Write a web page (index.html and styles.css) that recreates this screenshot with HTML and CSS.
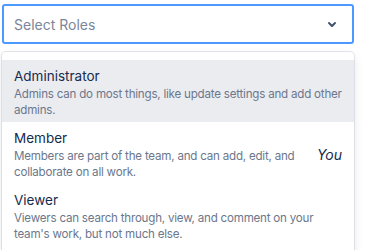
FILE: index.html
```html
<!DOCTYPE html>
<html lang="en">
  <head>
    <meta charset="UTF-8" />
    <title>Select Roles</title>
    <link rel="stylesheet" href="styles.css">
  </head>
  <body>
    <div class="wrapper">
      <div class="select">
        <span class="placeholder">Select Roles</span>
        <span class="indicator">
          <svg width="24" height="24" viewBox="0 0 24 24"><path fill="currentColor" d="M8.292 10.293a1.009 1.009 0 0 0 0 1.419l2.939 2.965c.218.215.5.322.779.322s.556-.107.769-.322l2.93-2.955a1.01 1.01 0 0 0 0-1.419.987.987 0 0 0-1.406 0l-2.298 2.317-2.307-2.327a.99.99 0 0 0-1.406 0z"/></svg>
        </span>
      </div>
      <div class="menu">
        <div class="option focused">
          <div class="text">
            <div class="title">Administrator</div>
            <div class="desc">Admins can do most things, like update settings and add other<br>admins.</div>
          </div>
        </div>
        <div class="option">
          <div class="text">
            <div class="title">Member</div>
            <div class="desc">Members are part of the team, and can add, edit, and<br>collaborate on all work.</div>
          </div>
          <em class="you">You</em>
        </div>
        <div class="option">
          <div class="text">
            <div class="title">Viewer</div>
            <div class="desc">Viewers can search through, view, and comment on your<br>team's work, but not much else.</div>
          </div>
        </div>
      </div>
    </div>
  </body>
</html>
```
FILE: styles.css
```css
* { box-sizing: border-box; font-family: 'Inter', sans-serif; }
body { margin: 0; background: white; color: #172B4D; overflow: hidden; }

.wrapper { padding: 4px 11px 0 2px; }

.select {
  display: flex;
  align-items: center;
  height: 40px;
  border: 2px solid #4C9AFF;
  border-radius: 3px;
  padding: 0 8px 0 8px;
}
.placeholder { flex: 1; color: #7A869A; font-size: 14px; padding-left: 2px; }
.indicator { display: flex; color: #42526E; }

.menu {
  margin-top: 8px;
  border-radius: 4px;
  padding: 8px 0;
  box-shadow: 0 0 0 1px rgba(9,30,66,0.1), 0 4px 11px rgba(9,30,66,0.1);
}

.option {
  display: flex;
  align-items: center;
  padding: 7px 8px 4px 12px;
}
.option.focused { background: #EBECF0; }
.text { flex: 1; min-width: 0; }
.title { font-size: 13.5px; line-height: 19px; }
.desc {
  font-size: 11.6px;
  line-height: 16px;
  color: #6B778C;
  letter-spacing: -0.22px;
  white-space: nowrap;
}
.you { font-size: 14px; color: #172B4D; padding: 0 4px 0 10px; }
```
